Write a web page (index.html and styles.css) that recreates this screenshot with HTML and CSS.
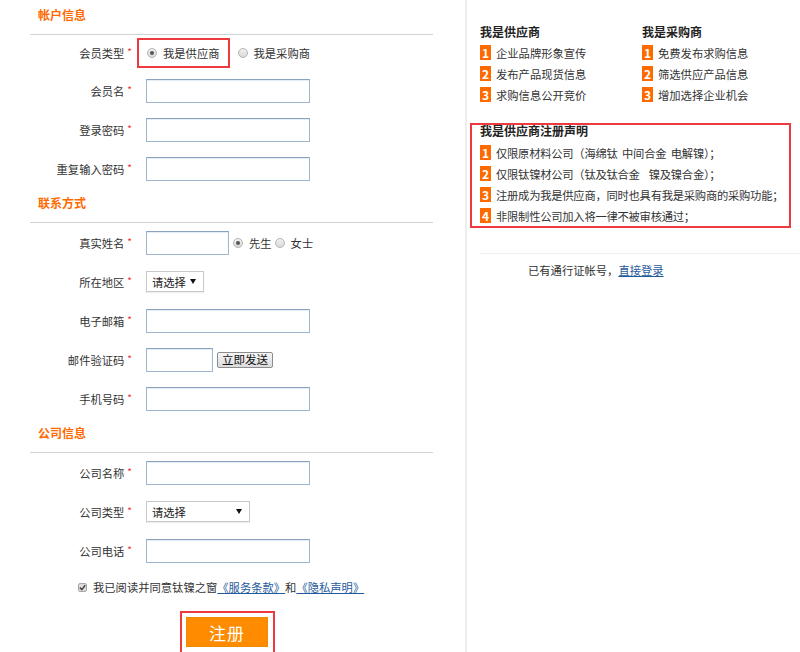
FILE: index.html
```html
<!DOCTYPE html>
<html lang="zh-CN">
<head>
<meta charset="UTF-8" />
<title>会员注册</title>
<link rel="stylesheet" href="styles.css">
</head>
<body>
<div class="page">

  <!-- Registration form -->
  <form class="reg-form">
    <h3 class="sec-title">帐户信息</h3>
    <div class="row row-type">
      <label class="lbl">会员类型<em>*</em></label>
      <span class="hl-box">
        <span class="radio checked"></span>我是供应商
      </span>
      <span class="radio gap-l"></span>我是采购商
    </div>
    <div class="row">
      <label class="lbl">会员名<em>*</em></label>
      <input class="txt" type="text" />
    </div>
    <div class="row">
      <label class="lbl">登录密码<em>*</em></label>
      <input class="txt" type="password" />
    </div>
    <div class="row">
      <label class="lbl">重复输入密码<em>*</em></label>
      <input class="txt" type="password" />
    </div>

    <h3 class="sec-title">联系方式</h3>
    <div class="row">
      <label class="lbl">真实姓名<em>*</em></label>
      <input class="txt txt-short" type="text" />
      <span class="radio checked gap-s"></span>先生
      <span class="radio gap-xs"></span>女士
    </div>
    <div class="row">
      <label class="lbl">所在地区<em>*</em></label>
      <span class="sel sel-area"><span>请选择</span><i class="arrow"></i></span>
    </div>
    <div class="row">
      <label class="lbl">电子邮箱<em>*</em></label>
      <input class="txt" type="text" />
    </div>
    <div class="row">
      <label class="lbl">邮件验证码<em>*</em></label>
      <input class="txt txt-code" type="text" />
      <button class="btn-send" type="button">立即发送</button>
    </div>
    <div class="row">
      <label class="lbl">手机号码<em>*</em></label>
      <input class="txt" type="text" />
    </div>

    <h3 class="sec-title">公司信息</h3>
    <div class="row">
      <label class="lbl">公司名称<em>*</em></label>
      <input class="txt" type="text" />
    </div>
    <div class="row">
      <label class="lbl">公司类型<em>*</em></label>
      <span class="sel sel-type"><span>请选择</span><i class="arrow"></i></span>
    </div>
    <div class="row">
      <label class="lbl">公司电话<em>*</em></label>
      <input class="txt" type="text" />
    </div>

    <div class="agree">
      <span class="chk"><svg width="7" height="7" viewBox="0 0 7 7"><path d="M0.8 3.6 L2.8 5.6 L6.2 1.2" fill="none" stroke="#444" stroke-width="1.4"/></svg></span>
      我已阅读并同意钛镍之窗<a href="#">《服务条款》</a>和<a href="#">《隐私声明》</a>
    </div>

    <div class="submit-wrap">
      <span class="hl-box hl-submit"><button class="btn-reg" type="button">注册</button></span>
    </div>
  </form>

  <!-- Side info -->
  <aside class="side">
    <div class="side-cols">
      <div class="side-col">
        <h4>我是供应商</h4>
        <ul class="num-list">
          <li><b>1</b>企业品牌形象宣传</li>
          <li><b>2</b>发布产品现货信息</li>
          <li><b>3</b>求购信息公开竞价</li>
        </ul>
      </div>
      <div class="side-col">
        <h4>我是采购商</h4>
        <ul class="num-list">
          <li><b>1</b>免费发布求购信息</li>
          <li><b>2</b>筛选供应产品信息</li>
          <li><b>3</b>增加选择企业机会</li>
        </ul>
      </div>
    </div>

    <div class="notice">
      <h4>我是供应商注册声明</h4>
      <ul class="num-list">
        <li><b>1</b>仅限原材料公司（海绵钛&nbsp;&nbsp;中间合金&nbsp;&nbsp;电解镍）；</li>
        <li><b>2</b>仅限钛镍材公司（钛及钛合金&nbsp;&nbsp;&nbsp;&nbsp;镍及镍合金）；</li>
        <li><b>3</b>注册成为我是供应商，同时也具有我是采购商的采购功能；</li>
        <li><b>4</b>非限制性公司加入将一律不被审核通过；</li>
      </ul>
    </div>

    <p class="login-tip">已有通行证帐号，<a href="#">直接登录</a></p>
  </aside>
</div>
</body>
</html>
```

FILE: styles.css
```css
/* Reset */
* {
  box-sizing: border-box;
}
body {
  margin: 0;
  background: #fff;
  color: #333;
  font-family: "Noto Sans CJK SC", "Liberation Sans", sans-serif;
  font-size: 11.3px;
}
ul {
  list-style: none;
  margin: 0;
  padding: 0;
}
a {
  color: #1f5a9c;
  text-decoration: underline;
}

.page {
  display: flex;
  min-height: 100vh;
}

/* Left form */
.reg-form {
  flex: 0 0 465px;
  width: 465px;
  padding: 0 32px 0 30px;
}
.sec-title {
  margin: 0;
  height: 35px;
  padding: 7px 0 0 8px;
  line-height: 16px;
  font-size: 12px;
  font-weight: 700;
  color: #ff6a00;
  border-bottom: 1px solid #d2d2d2;
}
.row {
  display: flex;
  align-items: center;
  height: 39px;
}
.row-type {
  height: 36px;
}
.lbl {
  width: 102px;
  text-align: right;
  margin-right: 14px;
  white-space: nowrap;
}
.lbl em {
  font-style: normal;
  color: #e33;
  font-size: 10px;
  vertical-align: top;
  margin-left: 3px;
  position: relative;
  top: -1px;
}
.txt {
  width: 164px;
  height: 24px;
  margin: 0;
  border: 1px solid #9fb6d1;
  border-top-color: #8aa3c2;
  box-shadow: inset 0 1px 1px #e3ebf4;
  padding: 2px 4px;
  font: inherit;
}
.txt-short {
  width: 83px;
}
.txt-code {
  width: 67px;
}

/* Red highlight outline */
.hl-box {
  display: inline-flex;
  align-items: center;
  border: 2px solid #ec3a3f;
}
.row-type .hl-box {
  height: 30px;
  margin-left: -9px;
  padding: 0 8px 0 8px;
}

/* Fake radios */
.radio {
  display: inline-block;
  width: 10px;
  height: 10px;
  border-radius: 50%;
  border: 1px solid #b4b4b4;
  background: linear-gradient(#f0f0f0, #d9d9d9);
  margin-right: 6px;
  position: relative;
}
.radio.checked::after {
  content: "";
  position: absolute;
  left: 2px;
  top: 2px;
  width: 4px;
  height: 4px;
  border-radius: 50%;
  background: #555;
}
.gap-l {
  margin-left: 8px;
}
.gap-s {
  margin-left: 4px;
}
.gap-xs {
  margin-left: 3px;
}

/* Fake selects */
.sel {
  display: inline-flex;
  align-items: center;
  justify-content: space-between;
  height: 21px;
  border: 1px solid #c9c9c9;
  box-shadow: 0 1px 1px #eee;
  padding: 0 7px 0 5px;
  color: #222;
}
.sel .arrow {
  width: 0;
  height: 0;
  border-left: 3px solid transparent;
  border-right: 3px solid transparent;
  border-top: 5px solid #111;
}
.sel-area {
  width: 58px;
}
.sel-type {
  width: 104px;
}

.btn-send {
  margin-left: 4px;
  height: 16px;
  padding: 0 4px;
  font: inherit;
  font-size: 11.5px;
  line-height: 13px;
  color: #111;
  border: 1px solid #8c8c8c;
  border-radius: 2px;
  background: linear-gradient(#f6f6f6, #dcdcdc);
}

.agree {
  display: flex;
  align-items: center;
  height: 34px;
  padding-left: 48px;
}
.chk {
  display: inline-flex;
  align-items: center;
  justify-content: center;
  width: 9px;
  height: 9px;
  border: 1px solid #a8a8a8;
  border-radius: 2px;
  background: #dcdcdc;
  margin-right: 6px;
}

.submit-wrap {
  margin-top: 7px;
  padding-left: 150px;
}
.hl-submit {
  padding: 4px 5px 8px 4px;
}
.btn-reg {
  width: 82px;
  height: 30px;
  border: 1px solid #f08a00;
  background: #ff8c00;
  color: #fff;
  font: inherit;
  font-size: 17px;
  letter-spacing: 1px;
  cursor: pointer;
}

/* Right side */
.side {
  flex: 1;
  min-width: 0;
  border-left: 2px solid #eeeeee;
  padding: 22px 0 0 0;
}
.side h4 {
  margin: 0;
  font-size: 12px;
  font-weight: 700;
  color: #222;
}
.side-cols {
  display: flex;
  padding-left: 13px;
}
.side-col {
  width: 162px;
  flex-shrink: 0;
}
.side-col h4 {
  line-height: 20px;
}
.num-list li {
  display: flex;
  align-items: center;
  height: 21px;
  white-space: nowrap;
}
.num-list b {
  display: inline-block;
  flex-shrink: 0;
  width: 11px;
  height: 15px;
  line-height: 15px;
  text-align: center;
  background: #ff6a00;
  color: #fff;
  font-size: 12px;
  font-weight: 700;
  margin-right: 5px;
}

.notice {
  margin: 18px 9px 0 3px;
  border: 2px solid #ec3a3f;
  padding: 0 0 0 8px;
  overflow: hidden;
}
.notice h4 {
  line-height: 12px;
  padding: 0 0 5px;
}
.notice .num-list li {
  letter-spacing: -0.25px;
}

.login-tip {
  margin: 25px 0 0 13px;
  border-top: 1px solid #f0f0f0;
  padding: 9px 0 0 48px;
  line-height: 14px;
}
```
